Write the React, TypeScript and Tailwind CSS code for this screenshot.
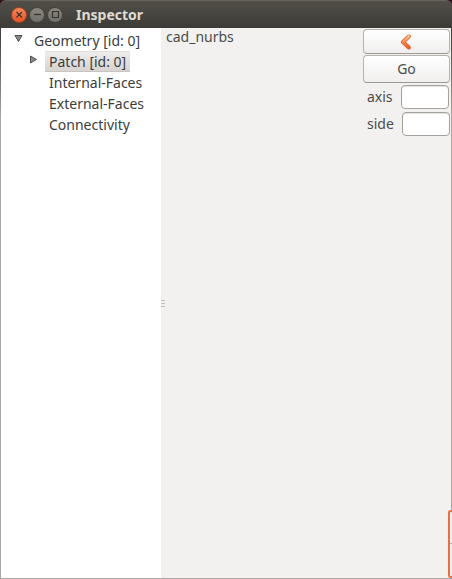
import { useState } from 'react';
import type { ReactNode } from 'react';

function WindowButton({ label, close, children }: { label: string; close?: boolean; children: ReactNode }) {
  return (
    <button
      type="button"
      aria-label={label}
      className={
        'flex size-4 items-center justify-center rounded-full border ' +
        (close
          ? 'border-[#a5421f] bg-linear-to-b from-[#f7855c] to-[#e9521f]'
          : 'border-[#45443f] bg-linear-to-b from-[#8a8780] to-[#716f68]')
      }
    >
      <svg viewBox="0 0 14 14" className="size-3.5 shrink-0" fill="none" stroke="#35332e" strokeWidth="1.2">
        {children}
      </svg>
    </button>
  );
}

function TitleBar() {
  return (
    <header className="flex h-7 shrink-0 items-center gap-0.5 rounded-t-md border-t border-[#66645d] bg-linear-to-b from-[#524f49] to-[#3c3b37] pl-[11px]">
      <WindowButton label="Close" close>
        <path d="M4.5 4l5.5 5.5M10 4l-5.5 5.5" />
      </WindowButton>
      <WindowButton label="Minimize">
        <path d="M4 6.5h7" />
      </WindowButton>
      <WindowButton label="Maximize">
        <path d="M4.5 3.5h6v6h-6z" />
      </WindowButton>
      <h1 className="pl-[11px] text-[14px] font-bold text-[#dfdbd2]">Inspector</h1>
    </header>
  );
}

function Tree() {
  const [selected, setSelected] = useState('Patch [id: 0]');
  const children = ['Patch [id: 0]', 'Internal-Faces', 'External-Faces', 'Connectivity'];
  return (
    <nav className="w-40 shrink-0 bg-white pt-0.5 text-[#3c3c3c]">
      <div className="flex h-[21px] items-center pl-3">
        <button type="button" aria-label="Collapse Geometry" className="mb-1 mr-2.5">
          <svg viewBox="0 0 11 9" className="h-[9px] w-[11px]">
            <path d="M2 1.5h7L5.5 7.5z" fill="#8a8a8a" stroke="#505050" />
          </svg>
        </button>
        <span className="whitespace-nowrap">Geometry [id: 0]</span>
      </div>
      <ul>
        {children.map((name, i) => (
          <li key={name} className="flex h-[21px] items-center pl-7">
            <span className="mb-1 w-4 shrink-0">
              {i === 0 && (
                <svg viewBox="0 0 9 11" className="h-[11px] w-[9px]">
                  <path d="M1.5 2v7L7.5 5.5z" fill="#8a8a8a" stroke="#505050" />
                </svg>
              )}
            </span>
            <button
              type="button"
              onClick={() => setSelected(name)}
              className={
                'flex h-[21px] items-center whitespace-nowrap px-1 ' +
                (selected === name ? 'border-y border-t-[#e0dedc] border-b-[#c8c4c0] bg-linear-to-b from-[#efeeed] to-[#d6d3d0]' : '')
              }
            >
              {name}
            </button>
          </li>
        ))}
      </ul>
    </nav>
  );
}

function PushButton({ label, children, className }: { label: string; children: ReactNode; className: string }) {
  return (
    <button
      type="button"
      aria-label={label}
      className={
        'flex w-full items-center justify-center rounded-[4px] border border-[#b5b2ae] border-b-[#9c9995] bg-linear-to-b from-white to-[#f0efee] ' +
        className
      }
    >
      {children}
    </button>
  );
}

function Field({ id }: { id: string }) {
  return (
    <div className="flex h-[27px] items-center gap-2 pl-1">
      <label htmlFor={id}>{id}</label>
      <input
        id={id}
        type="text"
        className="h-6 w-12 rounded-[4px] border border-[#a5a29d] bg-white px-1 shadow-[inset_0_1px_1px_#e4e2e0] outline-none"
      />
    </div>
  );
}

export default function App() {
  return (
    <div className="relative flex min-h-screen flex-col overflow-hidden bg-[#35101f] font-['Noto_Sans','Open_Sans',sans-serif] text-[14px] leading-5 text-[#4c4c4c]">
      <TitleBar />
      <div className="flex grow bg-linear-to-b from-[#3c3b37] to-[#aaa6a1] to-[90px] px-px pb-px">
        <Tree />
        <main className="flex grow bg-[#f2f1f0]">
          <div aria-hidden="true" className="flex w-[5px] shrink-0 flex-col justify-center gap-0.5">
            <i className="h-px w-1 bg-[#c3c0bc]" />
            <i className="h-px w-1 bg-[#c3c0bc]" />
            <i className="h-px w-1 bg-[#c3c0bc]" />
          </div>
          <p className="grow leading-[18px]">cad_nurbs</p>
          <aside className="mr-px w-[87px] shrink-0 pt-px">
            <PushButton label="Back" className="h-[25px]">
              <svg viewBox="0 0 14 16" className="h-4 w-3.5" fill="none" strokeLinecap="round" strokeLinejoin="round">
                <defs>
                  <linearGradient id="arrow" x1="0" y1="0" x2="0" y2="1">
                    <stop offset="0" stopColor="#fbbd82" />
                    <stop offset="1" stopColor="#ee5a20" />
                  </linearGradient>
                </defs>
                <path d="M8.8 2.5L3 8L8.8 13.5" stroke="#d9602c" strokeWidth="4" />
                <path d="M8.8 2.5L3 8L8.8 13.5" stroke="url(#arrow)" strokeWidth="2.6" />
              </svg>
            </PushButton>
            <PushButton label="Go" className="mt-px h-7">
              Go
            </PushButton>
            <Field id="axis" />
            <Field id="side" />
          </aside>
        </main>
      </div>
      <div
        aria-hidden="true"
        className="absolute right-0 bottom-px h-[68px] w-1 rounded-l-[3px] border-y-2 border-l-2 border-[#ea6f43] bg-[#f2f1f0]"
      >
        <div className="h-1/2 border-b border-[#b5b2ae]" />
      </div>
    </div>
  );
}
